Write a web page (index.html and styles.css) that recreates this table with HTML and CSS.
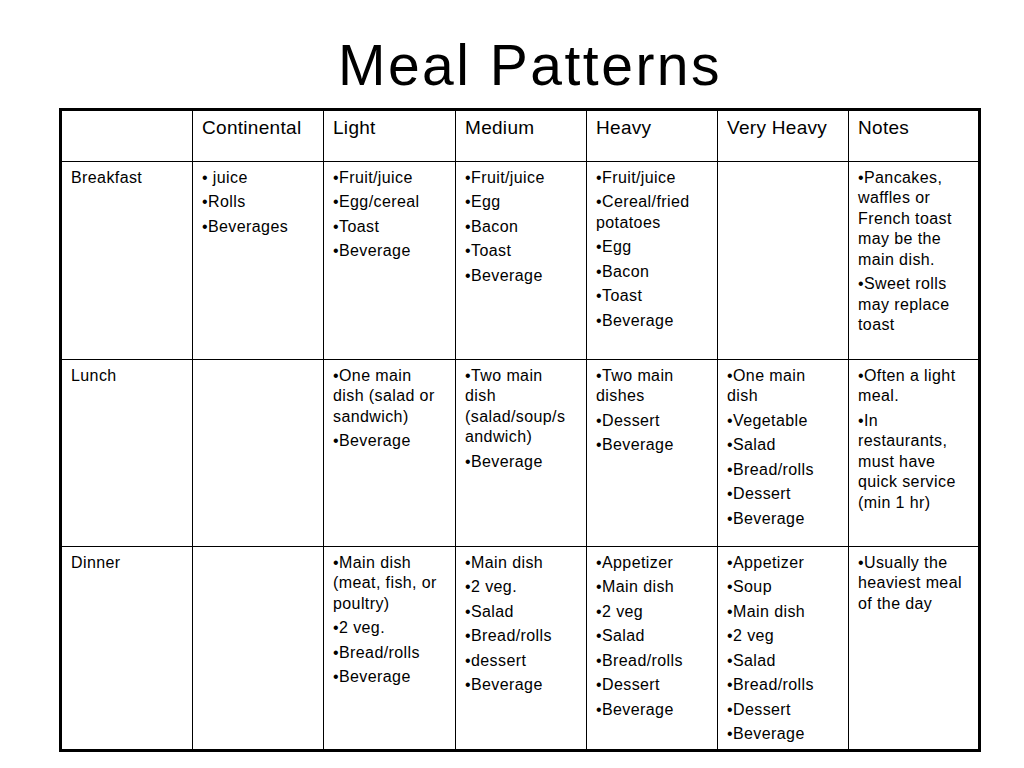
FILE: index.html
```html
<!DOCTYPE html>
<html>
<head>
<meta charset="utf-8">
<link rel="stylesheet" href="styles.css">
</head>
<body>
<h1 class="title">Meal Patterns</h1>
<table class="meals">
<colgroup>
<col class="c0"><col class="c1"><col class="c2"><col class="c3"><col class="c4"><col class="c5"><col class="c6">
</colgroup>
<tr class="head">
<th></th><th>Continental</th><th>Light</th><th>Medium</th><th>Heavy</th><th>Very Heavy</th><th>Notes</th>
</tr>
<tr class="r-breakfast">
<td><p>Breakfast</p></td>
<td><p>• juice</p><p>•Rolls</p><p>•Beverages</p></td>
<td><p>•Fruit/juice</p><p>•Egg/cereal</p><p>•Toast</p><p>•Beverage</p></td>
<td><p>•Fruit/juice</p><p>•Egg</p><p>•Bacon</p><p>•Toast</p><p>•Beverage</p></td>
<td><p>•Fruit/juice</p><p>•Cereal/fried potatoes</p><p>•Egg</p><p>•Bacon</p><p>•Toast</p><p>•Beverage</p></td>
<td></td>
<td><p>•Pancakes, waffles or French toast may be the main dish.</p><p>•Sweet rolls may replace toast</p></td>
</tr>
<tr class="r-lunch">
<td><p>Lunch</p></td>
<td></td>
<td><p>•One main dish (salad or sandwich)</p><p>•Beverage</p></td>
<td><p>•Two main dish (salad/soup/s andwich)</p><p>•Beverage</p></td>
<td><p>•Two main dishes</p><p>•Dessert</p><p>•Beverage</p></td>
<td><p>•One main dish</p><p>•Vegetable</p><p>•Salad</p><p>•Bread/rolls</p><p>•Dessert</p><p>•Beverage</p></td>
<td><p>•Often a light meal.</p><p>•In restaurants, must have quick service (min 1 hr)</p></td>
</tr>
<tr class="r-dinner">
<td><p>Dinner</p></td>
<td></td>
<td><p>•Main dish (meat, fish, or poultry)</p><p>•2 veg.</p><p>•Bread/rolls</p><p>•Beverage</p></td>
<td><p>•Main dish</p><p>•2 veg.</p><p>•Salad</p><p>•Bread/rolls</p><p>•dessert</p><p>•Beverage</p></td>
<td><p>•Appetizer</p><p>•Main dish</p><p>•2 veg</p><p>•Salad</p><p>•Bread/rolls</p><p>•Dessert</p><p>•Beverage</p></td>
<td><p>•Appetizer</p><p>•Soup</p><p>•Main dish</p><p>•2 veg</p><p>•Salad</p><p>•Bread/rolls</p><p>•Dessert</p><p>•Beverage</p></td>
<td><p>•Usually the heaviest meal of the day</p></td>
</tr>
</table>
</body>
</html>
```
FILE: styles.css
```css
html, body {
  margin: 0;
  padding: 0;
  background: #fff;
  color: #000;
  font-family: "Liberation Sans", Arial, sans-serif;
}
.title {
  margin: 0;
  height: 108px;
  line-height: 130px;
  font-size: 57px;
  letter-spacing: 2.5px;
  font-weight: normal;
  text-align: center;
  padding-left: 36px;
  box-sizing: border-box;
}
.meals {
  border-collapse: separate;
  border-spacing: 0;
  margin-left: 59px;
  border: 3px solid #000;
  table-layout: fixed;
  width: 922px;
}
.c0 { width: 131px; }
.c1 { width: 131px; }
.c2 { width: 132px; }
.c3 { width: 131px; }
.c4 { width: 131px; }
.c5 { width: 131px; }
.c6 { width: 129px; }
.meals th, .meals td {
  border-right: 1px solid #000;
  border-bottom: 1px solid #000;
  vertical-align: top;
  text-align: left;
  padding: 5px 10px 0 9px;
  box-sizing: border-box;
}
.meals th:last-child, .meals td:last-child {
  border-right: none;
}
.meals tr:last-child td {
  border-bottom: none;
}
.meals th {
  font-weight: normal;
  font-size: 19px;
  letter-spacing: 0.3px;
  line-height: 23px;
}
.meals td {
  font-size: 16px;
  letter-spacing: 0.4px;
  line-height: 20.5px;
  padding-top: 5.5px;
}
.meals p {
  margin: 0 0 4px 0;
}
.head { height: 51px; }
.r-breakfast { height: 198px; }
.r-lunch { height: 187px; }
.r-dinner { height: 201px; }
```
